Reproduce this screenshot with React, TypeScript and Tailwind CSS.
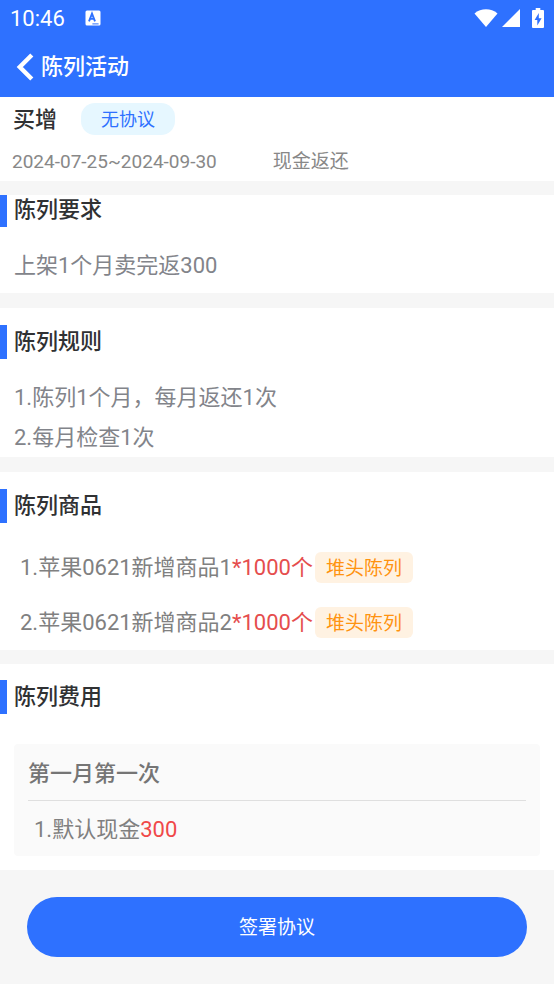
import type { ReactNode } from "react";

function StatusBar() {
  return (
    <div className="flex h-9 items-center pr-[10px] pl-[10px] text-white">
      <span className="pt-[2px] text-[22px] leading-9">10:46</span>
      <svg className="ml-5 h-4 w-4" viewBox="0 0 16 16" aria-hidden="true">
        <rect x="0.5" y="0.5" width="15" height="15" rx="1.5" fill="#fff" />
        <path
          d="M4 11.3 L7 3.6 L10 11.3 M5.1 8.9 H8.9"
          fill="none"
          stroke="#2e71ff"
          strokeWidth="1.9"
        />
        <path d="M7.4 13.9 H13.6" stroke="#2e71ff" strokeWidth="1" />
      </svg>
      <svg className="ml-auto h-[18px] w-6" viewBox="0 0 24 18" aria-hidden="true">
        <path d="M0.5 4.4 C7 -1 17 -1 23.5 4.4 L12 18 Z" fill="#fff" />
      </svg>
      <svg className="ml-1 h-[18px] w-[18px]" viewBox="0 0 18 18" aria-hidden="true">
        <path d="M18 0 V18 H0 Z" fill="#fff" />
      </svg>
      <svg className="ml-3 h-5 w-3" viewBox="0 0 12 20" aria-hidden="true">
        <path
          d="M3.7 0 H8.3 V2 H11 Q12 2 12 3 V19 Q12 20 11 20 H1 Q0 20 0 19 V3 Q0 2 1 2 H3.7 Z"
          fill="#fff"
        />
        <path d="M6.8 5 L2.6 12 H5.3 V17.4 L9.6 10.2 H6.8 Z" fill="#2e71ff" />
      </svg>
    </div>
  );
}

interface SectionProps {
  title: string;
  className: string;
  compact?: boolean;
  children: ReactNode;
}

function Section({ title, className, compact = false, children }: SectionProps) {
  return (
    <section className={`bg-white ${className}`}>
      <h2
        className={`border-l-[7px] border-[#2e71ff] pl-[7px] text-[22px] font-medium text-[#303133] ${
          compact ? "h-8 leading-[30px]" : "leading-[34px]"
        }`}
      >
        {title}
      </h2>
      {children}
    </section>
  );
}

const products = ["1.苹果0621新增商品1", "2.苹果0621新增商品2"];

export default function App() {
  return (
    <div className="flex min-h-screen flex-col bg-[#f6f6f6] font-[Roboto,'Noto_Sans_CJK_SC',sans-serif]">
      <header className="bg-[#2e71ff]">
        <StatusBar />
        <div className="flex h-[61px] items-center pl-4 text-white">
          <button type="button" aria-label="返回" className="flex h-8 w-[25px] items-center">
            <svg className="h-7 w-[18px]" viewBox="0 0 18 28" aria-hidden="true">
              <path d="M15.8 2 L3.8 14 L15.8 26" fill="none" stroke="#fff" strokeWidth="4.4" />
            </svg>
          </button>
          <h1 className="text-[22px] leading-8 font-medium">陈列活动</h1>
        </div>
      </header>

      <main className="flex flex-col">
        <section className="bg-white px-3 pt-[6px] pb-[3px]">
          <div className="flex items-start gap-6 pl-px">
            <h2 className="text-[22px] leading-[34px] font-medium text-[#303133]">买增</h2>
            <span className="rounded-[14px] bg-[#e6f7ff] px-5 pt-[2px] text-[18px] leading-[30px] text-[#2e71ff]">
              无协议
            </span>
          </div>
          <div className="mt-[9px] flex gap-14 text-[19px] leading-8 text-[#888]">
            <span>2024-07-25~2024-09-30</span>
            <span>现金返还</span>
          </div>
        </section>

        <Section title="陈列要求" compact className="mt-[14px] pb-[7px]">
          <p className="mt-[19px] px-[14px] text-[22px] leading-10 text-[#82848a]">上架1个月卖完返300</p>
        </Section>

        <Section title="陈列规则" className="mt-[15px] pt-[17px]">
          <div className="mt-[19px] -mb-px px-[14px] text-[22px] leading-10 text-[#82848a]">
            <p>1.陈列1个月，每月返还1次</p>
            <p>2.每月检查1次</p>
          </div>
        </Section>

        <Section title="陈列商品" className="mt-[15px] pt-[17px] pb-3">
          <ul className="mt-[29px] flex flex-col gap-6 px-5">
            {products.map((name) => (
              <li key={name} className="flex items-center gap-[2px] text-[22px] leading-[31px] text-[#808080]">
                <span>
                  {name}
                  <span className="text-[#e54d4d]">*1000个</span>
                </span>
                <span className="rounded-md bg-[#fff2e2] px-[11px] pt-[2px] text-[19px] leading-[29px] text-[#ff9310]">
                  堆头陈列
                </span>
              </li>
            ))}
          </ul>
        </Section>

        <Section title="陈列费用" className="mt-[14px] pt-4 pb-[14px]">
          <div className="mx-[14px] mt-[30px] rounded-sm bg-[#fafafa] px-[14px]">
            <h3 className="border-b border-[#dfdfdf] pt-[3px] text-[22px] leading-[53px] font-medium text-[#757575]">
              第一月第一次
            </h3>
            <p className="px-[6px] pt-[2px] text-[22px] leading-[53px] text-[#808080]">
              1.默认现金<span className="text-[#f04848]">300</span>
            </p>
          </div>
        </Section>
      </main>

      <footer className="px-[27px] py-[27px]">
        <button type="button" className="h-[60px] w-full rounded-full bg-[#2e71ff] pt-[3px] text-[19px] text-white">
          签署协议
        </button>
      </footer>
    </div>
  );
}
